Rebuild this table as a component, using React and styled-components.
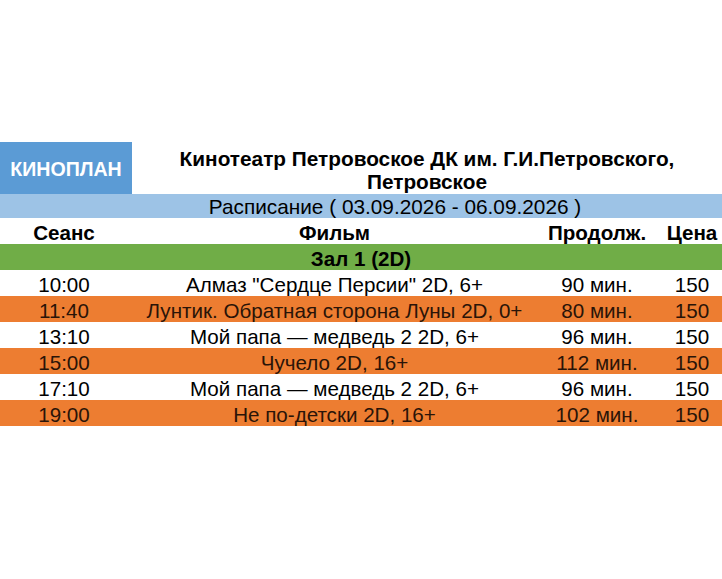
import React from "react";
import styled, { createGlobalStyle } from "styled-components";

const Global = createGlobalStyle`
  html, body { margin: 0; padding: 0; background: #ffffff; }
  body { font-family: "Liberation Sans", Arial, sans-serif; color: #000; }
`;

const Page = styled.div`
  width: 722px;
  padding-top: 142px;
`;

const Top = styled.div`
  display: flex;
  height: 52px;
`;

const Logo = styled.div`
  width: 132px;
  flex: none;
  background: #5b9bd5;
  color: #ffffff;
  font-weight: 700;
  font-size: 19.6px;
  display: flex;
  align-items: center;
  justify-content: center;
  padding-top: 3px;
  box-sizing: border-box;
`;

const Title = styled.div`
  flex: 1;
  text-align: center;
  font-weight: 700;
  font-size: 20.8px;
  line-height: 23px;
  padding-top: 5px;
  box-sizing: border-box;
  white-space: nowrap;
`;

const Grid = styled.div`
  display: grid;
  grid-template-columns: 128px 413px 121px 60px;
`;

const Band = styled.div`
  grid-column: 1 / -1;
  display: grid;
  grid-template-columns: subgrid;
  height: 24px;
  background: #9dc3e6;
  font-size: 20.8px;
  line-height: 22px;
  padding-top: 2px;
  box-sizing: border-box;
`;

const BandText = styled.div`
  grid-column: 2 / 4;
  text-align: center;
  white-space: nowrap;
`;

const Row = styled.div`
  grid-column: 1 / -1;
  display: grid;
  grid-template-columns: subgrid;
  height: 26px;
  background: ${(p) => (p.$tone === "orange" ? "#ed7d31" : p.$tone === "green" ? "#70ad47" : "#ffffff")};
  color: ${(p) => (p.$tone === "orange" ? "#2a1408" : "#000")};
  font-size: 20.6px;
  font-weight: ${(p) => (p.$bold ? 700 : 400)};
  line-height: 22px;
  padding-top: 4px;
  box-sizing: border-box;
`;

const Cell = styled.div`
  text-align: center;
  white-space: nowrap;
  padding-right: ${(p) => p.$pr || 0}px;
`;

const Hall = styled.div`
  grid-column: 1 / -1;
  text-align: center;
`;

const sessions = [
  ["10:00", 'Алмаз "Сердце Персии" 2D, 6+', "90 мин.", "150"],
  ["11:40", "Лунтик. Обратная сторона Луны 2D, 0+", "80 мин.", "150"],
  ["13:10", "Мой папа — медведь 2 2D, 6+", "96 мин.", "150"],
  ["15:00", "Чучело 2D, 16+", "112 мин.", "150"],
  ["17:10", "Мой папа — медведь 2 2D, 6+", "96 мин.", "150"],
  ["19:00", "Не по-детски 2D, 16+", "102 мин.", "150"],
];

export default function App() {
  return (
    <Page>
      <Global />
      <Top>
        <Logo>КИНОПЛАН</Logo>
        <Title>
          Кинотеатр Петровоское ДК им. Г.И.Петровского,
          <br />
          Петровское
        </Title>
      </Top>
      <Grid>
        <Band>
          <BandText>Расписание ( 03.09.2026 - 06.09.2026 )</BandText>
        </Band>
        <Row $bold>
          <Cell>Сеанс</Cell>
          <Cell>Фильм</Cell>
          <Cell $pr={9}>Продолж.</Cell>
          <Cell>Цена</Cell>
        </Row>
        <Row $tone="green" $bold>
          <Hall>Зал 1 (2D)</Hall>
        </Row>
        {sessions.map((s, i) => (
          <Row key={i} $tone={i % 2 ? "orange" : "white"}>
            <Cell>{s[0]}</Cell>
            <Cell>{s[1]}</Cell>
            <Cell $pr={9}>{s[2]}</Cell>
            <Cell>{s[3]}</Cell>
          </Row>
        ))}
      </Grid>
    </Page>
  );
}
